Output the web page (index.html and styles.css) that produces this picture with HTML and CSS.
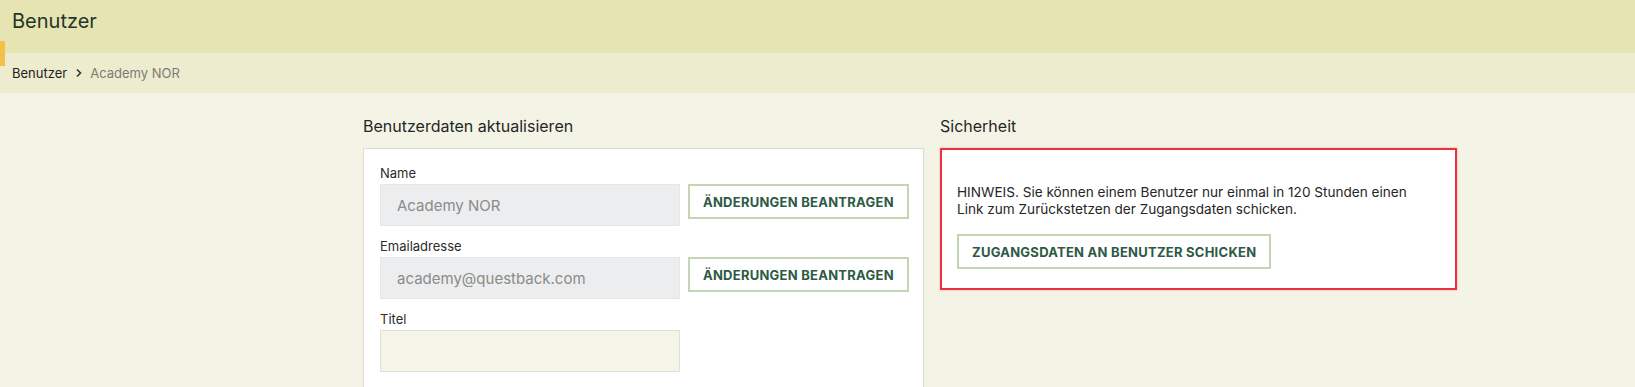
FILE: index.html
```html
<!DOCTYPE html>
<html lang="de">
<head>
    <meta charset="UTF-8">
    <title>Benutzer</title>
    <link rel="stylesheet" href="styles.css">
</head>
<body>

    <header class="page-header">
        <h1>Benutzer</h1>
        <span class="marker"></span>
    </header>

    <nav class="breadcrumb">
        <a href="#">Benutzer</a>
        <svg class="chevron" width="8" height="10" viewBox="0 0 8 10"><path d="M2 1.5 L5.5 5 L2 8.5" fill="none" stroke="#333" stroke-width="1.6"/></svg>
        <span class="current">Academy NOR</span>
    </nav>

    <main class="content">
        <section class="column">
            <h2>Benutzerdaten aktualisieren</h2>
            <div class="card">
                <div class="field">
                    <label>Name</label>
                    <div class="field-row">
                        <input class="input readonly" type="text" value="Academy NOR" readonly>
                        <button class="btn">Änderungen beantragen</button>
                    </div>
                </div>
                <div class="field">
                    <label>Emailadresse</label>
                    <div class="field-row">
                        <input class="input readonly" type="text" value="academy@questback.com" readonly>
                        <button class="btn">Änderungen beantragen</button>
                    </div>
                </div>
                <div class="field">
                    <label>Titel</label>
                    <div class="field-row">
                        <input class="input" type="text">
                    </div>
                </div>
            </div>
        </section>

        <section class="column">
            <h2>Sicherheit</h2>
            <div class="notice">
                <p>HINWEIS. Sie können einem Benutzer nur einmal in 120 Stunden einen Link zum Zurückstetzen der Zugangsdaten schicken.</p>
                <button class="btn">Zugangsdaten an Benutzer schicken</button>
            </div>
        </section>
    </main>

</body>
</html>
```

FILE: styles.css
```css
body {
    font-family: Inter, "Noto Sans", sans-serif;
    background-color: #f4f4e6;
    color: #2b2b2b;
    margin: 0;
    height: 387px;
    overflow: hidden;
}

.page-header {
    position: relative;
    height: 53px;
    background-color: #e6e4b2;
    padding: 0 12px;
    box-sizing: border-box;
}

.page-header h1 {
    margin: 0;
    padding-top: 9px;
    font-size: 20px;
    font-weight: 400;
    line-height: 24px;
    color: #243628;
}

.marker {
    position: absolute;
    left: 0;
    top: 41px;
    width: 5px;
    height: 25px;
    background-color: #f5c04a;
    z-index: 1;
}

.breadcrumb {
    height: 40px;
    background-color: #eeecce;
    display: flex;
    align-items: center;
    padding: 0 12px;
    font-size: 13px;
}

.breadcrumb a {
    color: #222;
    text-decoration: none;
}

.chevron {
    margin: 0 7px 0 8px;
}

.breadcrumb .current {
    color: #7b7b76;
}

.content {
    display: grid;
    grid-template-columns: 561px 517px;
    gap: 16px;
    padding-left: 363px;
    padding-top: 23px;
}

.column h2 {
    margin: 0 0 12px;
    font-size: 16px;
    font-weight: 400;
    line-height: 20px;
    color: #262626;
}

.card {
    background: #fff;
    border: 1px solid #dcdcd2;
    padding: 16px 16px 0;
    height: 300px;
}

.field {
    margin-bottom: 12px;
}

.field label {
    display: block;
    font-size: 13px;
    line-height: 16px;
    margin-bottom: 3px;
}

.field-row {
    display: flex;
    align-items: flex-start;
    gap: 8px;
}

.input {
    width: 300px;
    flex: none;
    height: 42px;
    box-sizing: border-box;
    border: 1px solid #dfdfd6;
    background-color: #f4f5e8;
    padding: 0 16px;
    font-family: inherit;
    font-size: 15px;
    color: #8b8b88;
    outline: none;
}

.input.readonly {
    background-color: #ecedee;
    border-color: #e6e6e6;
}

.btn {
    height: 35px;
    padding: 0 13px;
    background: #fff;
    border: 2px solid #c3d5b3;
    color: #2c5a44;
    font-family: inherit;
    font-size: 13px;
    font-weight: 700;
    letter-spacing: 0.25px;
    text-transform: uppercase;
    white-space: nowrap;
    cursor: pointer;
}

.notice {
    background: #fff;
    border: 2px solid #e8323e;
    box-shadow: 0 0 2px rgba(232, 50, 62, 0.4);
    padding: 34px 15px 19px;
}

.notice p {
    margin: 0 0 16px;
    font-size: 13.6px;
    line-height: 17px;
    color: #262626;
    max-width: 470px;
}
```
